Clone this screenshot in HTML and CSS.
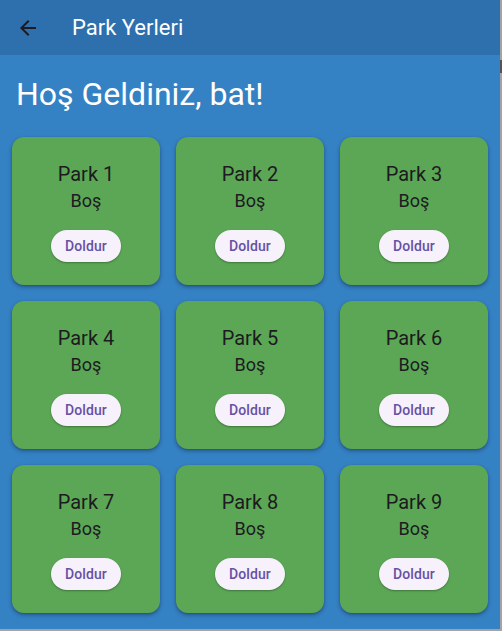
FILE: index.html
```html
<!DOCTYPE html>
<html lang="tr">
<head>
<meta charset="utf-8">
<title>Park Yerleri</title>
<link rel="stylesheet" href="styles.css">
</head>
<body>
<div class="app">
  <header class="appbar">
    <button class="back" aria-label="Geri">
      <svg width="24" height="24" viewBox="0 0 24 24"><path d="M20 11H7.83l5.59-5.59L12 4l-8 8 8 8 1.41-1.41L7.83 13H20v-2z" fill="#1d1b20"/></svg>
    </button>
    <h1 class="title">Park Yerleri</h1>
  </header>
  <main class="content">
    <h2 class="welcome">Hoş Geldiniz, bat!</h2>
    <div class="grid">
      <div class="card"><div class="name">Park 1</div><div class="status">Boş</div><button class="fill">Doldur</button></div>
      <div class="card"><div class="name">Park 2</div><div class="status">Boş</div><button class="fill">Doldur</button></div>
      <div class="card"><div class="name">Park 3</div><div class="status">Boş</div><button class="fill">Doldur</button></div>
      <div class="card"><div class="name">Park 4</div><div class="status">Boş</div><button class="fill">Doldur</button></div>
      <div class="card"><div class="name">Park 5</div><div class="status">Boş</div><button class="fill">Doldur</button></div>
      <div class="card"><div class="name">Park 6</div><div class="status">Boş</div><button class="fill">Doldur</button></div>
      <div class="card"><div class="name">Park 7</div><div class="status">Boş</div><button class="fill">Doldur</button></div>
      <div class="card"><div class="name">Park 8</div><div class="status">Boş</div><button class="fill">Doldur</button></div>
      <div class="card"><div class="name">Park 9</div><div class="status">Boş</div><button class="fill">Doldur</button></div>
    </div>
  </main>
  <div class="scroll-mark"></div>
</div>
</body>
</html>
```
FILE: styles.css
```css
html, body {
  margin: 0;
  padding: 0;
  background: #a3a3a3;
  height: 100%;
  overflow: hidden;
}
body {
  font-family: Roboto, "Liberation Sans", sans-serif;
}
.app {
  width: 500px;
  height: 629px;
  background: #3481c4;
  overflow: hidden;
  display: flex;
  flex-direction: column;
}
.appbar {
  height: 55px;
  flex: 0 0 55px;
  background: #2d70ad;
  display: flex;
  align-items: center;
}
.back {
  width: 56px;
  height: 55px;
  padding: 0 0 0 16px;
  margin: 0;
  border: 0;
  background: transparent;
  display: flex;
  align-items: center;
  justify-content: flex-start;
}
.back svg { display: block; }
.title {
  margin: 0 0 0 16px;
  font-size: 22px;
  font-weight: 400;
  line-height: 28px;
  color: #ffffff;
}
.content {
  flex: 1;
  overflow: hidden;
}
.welcome {
  margin: 0;
  padding: 19px 16px 23px;
  font-size: 32px;
  font-weight: 400;
  line-height: 40px;
  color: #ffffff;
}
.grid {
  display: grid;
  grid-template-columns: repeat(3, 148px);
  gap: 16px;
  padding: 0 12px;
}
.card {
  height: 148px;
  background: #5ba755;
  border-radius: 12px;
  box-shadow: 0 2px 4px rgba(0, 0, 0, 0.28), 0 1px 2px rgba(0, 0, 0, 0.15);
  display: flex;
  flex-direction: column;
  align-items: center;
  justify-content: center;
  color: #1d1b20;
}
.name {
  font-size: 20px;
  line-height: 24px;
  margin-top: 1px;
}
.status {
  font-size: 18px;
  line-height: 24px;
  margin-top: 3px;
}
.fill {
  margin-top: 17px;
  height: 32px;
  padding: 0 14px;
  border: 0;
  border-radius: 16px;
  background: #f6f1fa;
  color: #6750a4;
  font-family: Roboto, "Liberation Sans", sans-serif;
  font-size: 14px;
  font-weight: 500;
  letter-spacing: 0.1px;
  box-shadow: 0 1px 2px rgba(0, 0, 0, 0.3);
}
.scroll-mark {
  position: absolute;
  left: 500px;
  top: 60px;
  width: 2px;
  height: 13px;
  background: #555555;
}
```
